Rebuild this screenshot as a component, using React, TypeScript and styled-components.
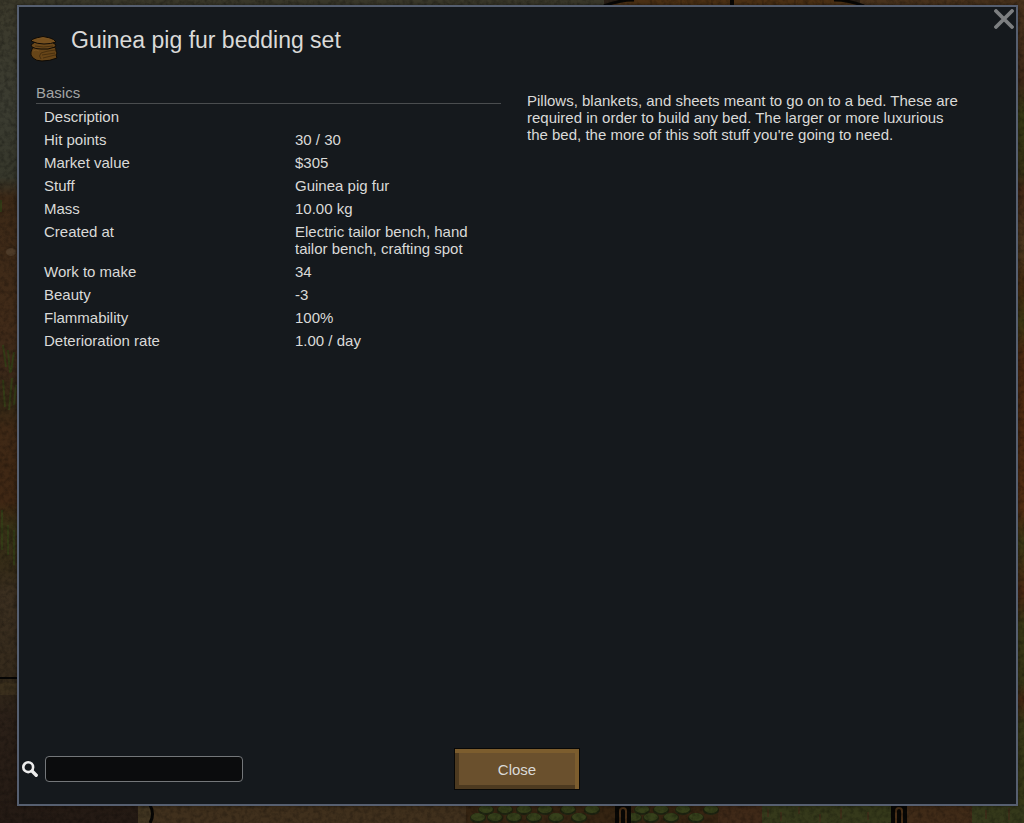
import React, { useState } from "react";
import styled, { createGlobalStyle } from "styled-components";

const GlobalStyle = createGlobalStyle`
  *, *::before, *::after { box-sizing: border-box; }
  body {
    margin: 0;
    background: #2b2118;
    color: #dadad8;
    font: 15px/17px "Liberation Sans", Arial, sans-serif;
  }
`;

const Screen = styled.div`
  position: relative;
  display: flex;
  min-height: 100vh;
  padding: 5px 6px 17px 17px;
`;

const Scenery = styled.svg`
  position: absolute;
  inset: 0;
  width: 100%;
  height: 100%;
`;

const Dialog = styled.main`
  position: relative;
  flex: 1;
  display: flex;
  flex-direction: column;
  min-width: 0;
  border: 2px solid #565f70;
  background: #15191d;
  box-shadow: 0 0 4px rgba(0, 0, 0, 0.5);
`;

const DismissButton = styled.button`
  position: absolute;
  top: 2px;
  right: 2px;
  display: flex;
  padding: 0;
  border: 0;
  background: none;
  cursor: pointer;
`;

const Header = styled.header`
  display: flex;
  align-items: flex-start;
  gap: 12px;
  padding: 20px 32px 0 10px;
`;

const ItemIcon = styled.svg`
  flex: none;
  width: 30px;
  height: 30px;
  margin-top: 5px;
`;

const Title = styled.h1`
  margin: 0;
  font-size: 23px;
  line-height: 26px;
  font-weight: 400;
`;

const Content = styled.div`
  flex: 1;
  display: grid;
  grid-template-columns: 1fr 1fr;
  gap: 26px;
  padding: 22px 24px 24px 17px;
`;

const Category = styled.h2`
  margin: 0;
  padding-bottom: 1px;
  border-bottom: 1px solid #4a4d4f;
  color: #a3a5a5;
  font-size: 15px;
  line-height: 18px;
  font-weight: 400;
`;

const StatTable = styled.table`
  width: 100%;
  margin-top: 1px;
  border-collapse: collapse;
  table-layout: fixed;
`;

const StatName = styled.th`
  width: 259px;
  padding: 3px 8px;
  text-align: left;
  vertical-align: top;
  font-weight: 400;
`;

const StatValue = styled.td`
  padding: 3px 0;
  vertical-align: top;
`;

const Explanation = styled.p`
  margin: 0;
  padding: 8px 24px 0 0;
`;

const Footer = styled.footer`
  display: grid;
  grid-template-columns: 1fr auto 1fr;
  align-items: center;
  padding: 0 4px 14px 3px;
`;

const Search = styled.label`
  display: flex;
  align-items: center;
  gap: 7px;
`;

const SearchInput = styled.input`
  width: 198px;
  height: 26px;
  padding: 0 6px;
  border: 1px solid #74777a;
  border-radius: 4px;
  outline: none;
  background: #0b0c0d;
  color: inherit;
  font: inherit;
`;

const CloseButton = styled.button`
  width: 126px;
  height: 42px;
  padding: 0;
  border: 1px solid #080807;
  background: #6a502d;
  box-shadow: inset -4px 4px 0 #7c5d2e, inset 4px -4px 0 #4d3a20;
  color: #dadad8;
  font: inherit;
  cursor: pointer;
`;

const stats = [
  ["Description", ""],
  ["Hit points", "30 / 30"],
  ["Market value", "$305"],
  ["Stuff", "Guinea pig fur"],
  ["Mass", "10.00 kg"],
  ["Created at", "Electric tailor bench, hand tailor bench, crafting spot"],
  ["Work to make", "34"],
  ["Beauty", "-3"],
  ["Flammability", "100%"],
  ["Deterioration rate", "1.00 / day"],
];

const leaves = [478, 486, 495, 505, 514, 524, 534, 545, 556, 568, 579, 592, 634, 642, 651, 661, 671, 683, 696, 711];

function Terrain() {
  return (
    <Scenery viewBox="0 0 1024 823" preserveAspectRatio="none" aria-hidden="true">
      <defs>
        <linearGradient id="west" x1="0" y1="0" x2="0" y2="1">
          <stop offset="0" stopColor="#3b392b" />
          <stop offset=".13" stopColor="#3b3c31" />
          <stop offset=".215" stopColor="#36372b" />
          <stop offset=".24" stopColor="#3c2917" />
          <stop offset=".4" stopColor="#412b19" />
          <stop offset=".45" stopColor="#3b2819" />
          <stop offset=".49" stopColor="#352916" />
          <stop offset=".52" stopColor="#3f2916" />
          <stop offset=".61" stopColor="#3f2714" />
          <stop offset=".64" stopColor="#363016" />
          <stop offset=".69" stopColor="#352b18" />
          <stop offset=".72" stopColor="#3b2f20" />
          <stop offset=".82" stopColor="#352a1c" />
        </linearGradient>
        <linearGradient id="east" x1="0" y1="0" x2="0" y2="1">
          <stop offset="0" stopColor="#49331d" />
          <stop offset=".1" stopColor="#3f2918" />
          <stop offset=".14" stopColor="#363915" />
          <stop offset=".21" stopColor="#373115" />
          <stop offset=".23" stopColor="#422715" />
          <stop offset=".3" stopColor="#4b371f" />
          <stop offset=".35" stopColor="#44290f" />
          <stop offset=".39" stopColor="#3e3914" />
          <stop offset=".43" stopColor="#4a2810" />
          <stop offset=".62" stopColor="#502c12" />
          <stop offset=".66" stopColor="#3c3916" />
          <stop offset=".72" stopColor="#4a2712" />
          <stop offset=".76" stopColor="#383716" />
          <stop offset=".83" stopColor="#373516" />
          <stop offset=".85" stopColor="#452712" />
          <stop offset=".88" stopColor="#373717" />
          <stop offset="1" stopColor="#383a19" />
        </linearGradient>
        <linearGradient id="plaza" x1="0" y1="0" x2="0" y2="1">
          <stop offset="0" stopColor="#33291a" />
          <stop offset=".25" stopColor="#2b2018" />
          <stop offset="1" stopColor="#241a14" />
        </linearGradient>
        <filter id="grain" x="0" y="0" width="100%" height="100%">
          <feTurbulence type="fractalNoise" baseFrequency=".22" numOctaves="3" seed="8" />
          <feColorMatrix values="0 0 0 0 0  0 0 0 0 0  0 0 0 0 0  0 0 0 1.6 -.62" />
        </filter>
      </defs>
      <path fill="url(#west)" d="M0 0h604v823H0z" />
      <path fill="url(#east)" d="M860 0h164v823H860z" />
      <path fill="#4c3115" d="M604 6q15-6 30-6h200q15 0 30 6z" />
      <path fill="none" stroke="#080705" strokeWidth="3" d="M604 6q15-6 30-6M864 6q-15-6-30-6" />
      <path stroke="#080705" strokeWidth="4" d="M732 0v6" />
      <path stroke="#392510" d="M651 0v6M681 0v6M712 0v6M763 0v6M795 0v6M823 0v6" />
      <path fill="url(#plaza)" d="M0 679h18v126h120v18H0z" />
      <path fill="#413520" d="M0 684l6-2 6 2 6-1v12H0z" opacity=".6" />
      <path stroke="#070605" strokeWidth="2" d="M0 678h18" />
      <path fill="#413521" d="M138 805h14v18h-14z" />
      <path fill="#40301d" d="M152 805h314v18H152z" />
      <path fill="none" stroke="#070605" strokeWidth="3" d="M150 805q5 9 0 18" />
      <path fill="#352412" d="M466 805h254v18H466z" />
      <path fill="#3f2918" d="M718 805h44v18h-44z" />
      <path fill="#35391b" d="M762 805h130v18H762zM972 805h52v18h-52z" />
      <path fill="#402b18" d="M892 805h80v18h-80z" />
      {leaves.map((x, i) => (
        <g key={x}>
          <ellipse cx={x} cy={i % 2 ? 810 : 818} rx="8" ry="5" fill="#1e2411" />
          <ellipse cx={x} cy={i % 2 ? 809 : 817} rx="7" ry="4" fill="#36401b" />
        </g>
      ))}
      <path stroke="#343c17" strokeWidth="2" d="M1 200v12M3 345l3 22M8 350l2 23M14 352l-3 20M3 380l2 27M12 378l-3 32M16 385l-2 20M2 510v40M8 525v30M14 530v35" />
      <path stroke="#49291a" d="M768 809v8M781 812v9M799 807v7M820 814v8M841 808v11M868 812v8M986 810v9M1009 808v12" />
      <ellipse cx="11" cy="252" rx="5" ry="4" fill="#4e3b28" />
      <path fill="#080705" d="M615 805h16v18h-16zM891 805h16v18h-16z" />
      <path fill="none" stroke="#493018" strokeWidth="2" d="M620 823v-12q0-3 3-3t3 3v12M896 823v-12q0-3 3-3t3 3v12" />
      <path filter="url(#grain)" d="M0 0h1024v823H0z" opacity=".35" />
    </Scenery>
  );
}

function BeddingIcon() {
  return (
    <ItemIcon viewBox="0 0 30 30" aria-hidden="true">
      <g stroke="#0e0a05" strokeWidth="1" strokeLinejoin="round">
        <path fill="#674518" d="M2 20q0-4 5-6l17 0q4 2 3 5l1 2-1 2 1 3q-7 3-15 3-6 0-9-3-3-3-2-6z" />
        <path fill="#6b481b" d="M2 13l4-3h17l4 3-1 2q-7 3-14 2-6 0-9-2z" />
        <path fill="#76501f" d="M2 9q1-2 5-3 7-3 14 0 4 1 6 4-5 2-12 2t-13-3z" />
      </g>
      <path fill="none" stroke="#3f290d" strokeWidth=".8" d="M6 14q8 2 18 0M12 27q-3-3 0-6 5-2 14-3M13 23l13-2M14 26l12-3" />
      <path fill="none" stroke="#7c5623" strokeWidth=".8" d="M4 19q3-2 6 0M8 7q6-2 12 0" />
    </ItemIcon>
  );
}

export default function App() {
  const [query, setQuery] = useState("");

  return (
    <>
      <GlobalStyle />
      <Screen>
        <Terrain />
        <Dialog>
          <Header>
            <BeddingIcon />
            <Title>Guinea pig fur bedding set</Title>
          </Header>
          <Content>
            <section>
              <Category id="basics">Basics</Category>
              <StatTable aria-labelledby="basics">
                <tbody>
                  {stats.map(([name, value]) => (
                    <tr key={name}>
                      <StatName scope="row">{name}</StatName>
                      <StatValue>{value}</StatValue>
                    </tr>
                  ))}
                </tbody>
              </StatTable>
            </section>
            <Explanation>
              Pillows, blankets, and sheets meant to go on to a bed. These are required in
              order to build any bed. The larger or more luxurious the bed, the more of this
              soft stuff you're going to need.
            </Explanation>
          </Content>
          <Footer>
            <Search>
              <svg width="16" height="16" viewBox="0 0 16 16" fill="none" stroke="#ededed" role="img" aria-label="Search">
                <circle cx="6.2" cy="6.2" r="4.9" strokeWidth="2.6" />
                <path d="M10 10l4.2 4.2" strokeWidth="3.4" strokeLinecap="round" />
              </svg>
              <SearchInput type="text" value={query} onChange={(e) => setQuery(e.target.value)} />
            </Search>
            <CloseButton type="button">Close</CloseButton>
          </Footer>
          <DismissButton type="button" aria-label="Dismiss">
            <svg width="20" height="20" viewBox="0 0 20 20" stroke="#7d7f81" strokeWidth="3.8" strokeLinecap="round">
              <path d="M2 2l16 16M18 2L2 18" />
            </svg>
          </DismissButton>
        </Dialog>
      </Screen>
    </>
  );
}
